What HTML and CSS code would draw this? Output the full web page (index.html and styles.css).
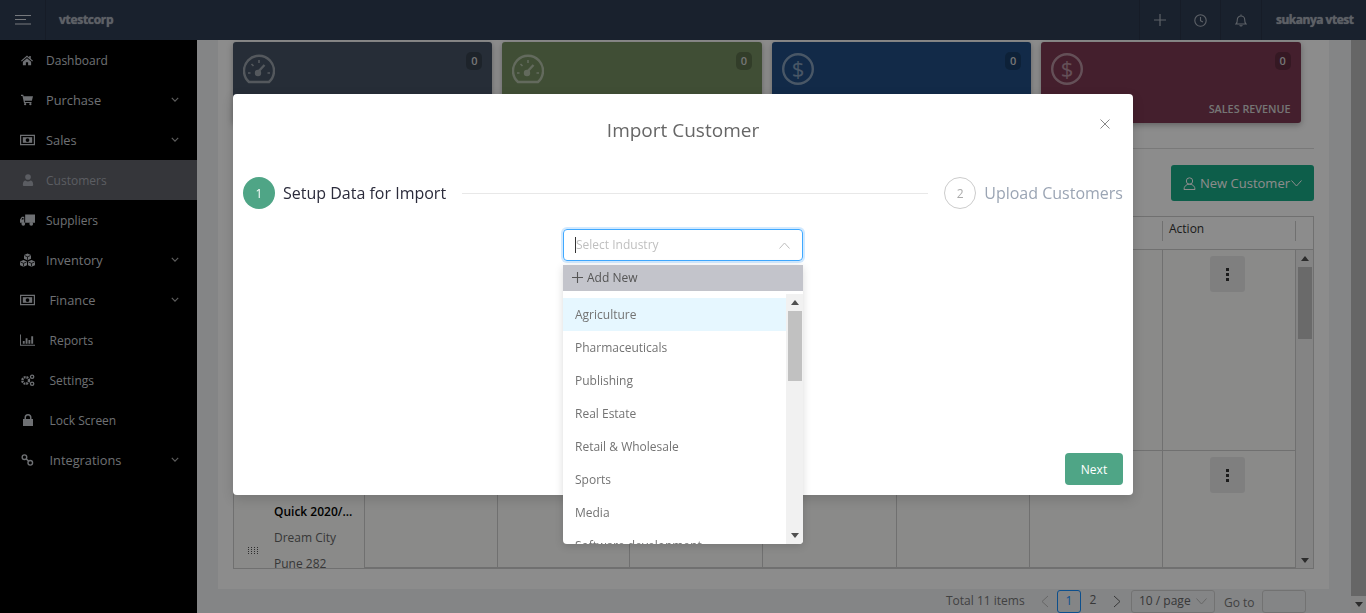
FILE: index.html
```html
<!DOCTYPE html>
<html lang="en">
<head>
<meta charset="utf-8">
<title>Customers</title>
<link rel="stylesheet" href="styles.css">
</head>
<body>
<header class="topbar">
  <div class="burger-cell">
    <svg class="burger" width="16" height="10" viewBox="0 0 16 10"><path d="M0 .5h16M0 4.500h11M0 9h16" stroke="#d8dde4" stroke-width="1" fill="none"/></svg>
  </div>
  <div class="brand">vtestcorp</div>
  <div class="top-actions">
    <div class="top-cell"><svg width="12" height="12" viewBox="0 0 12 12"><path d="M6 0v12M0 6h12" stroke="#aab2bd" stroke-width="1.200" fill="none"/></svg></div>
    <div class="top-cell"><svg width="13" height="13" viewBox="0 0 13 13" fill="none" stroke="#aab2bd" stroke-width="1.100"><circle cx="6.500" cy="6.500" r="5.700"/><path d="M6.500 3v3.700l2.400 1.400"/></svg></div>
    <div class="top-cell"><svg width="12" height="13" viewBox="0 0 12 13" fill="none" stroke="#aab2bd" stroke-width="1.100"><path d="M1 10h10c-1-1-1.300-2-1.300-4.300C9.700 3.500 8.200 2 6 2S2.300 3.500 2.300 5.700C2.300 8 2 9 1 10zM4.700 11.300c.4.900 2.200.9 2.600 0M6 .5V2"/></svg></div>
    <div class="user">sukanya vtest</div>
  </div>
</header>

<div class="layout">
  <nav class="sidebar">
    <a class="nav-item"><svg class="nav-icon" viewBox="0 0 16 14"><path d="M8 1 0 8l1 1 7-6 7 6 1-1-3-2.600V1.500h-2v2.200zM2.500 9.300V14h4V10h3v4h4V9.300L8 4.500z"/></svg><span class="nav-label">Dashboard</span></a>
    <a class="nav-item sub"><svg class="nav-icon" viewBox="0 0 16 14"><path d="M0 0h3l.5 2H16l-1.500 6H5l.3 1.500H14V11H4L2 1.500H0z"/><circle cx="5.500" cy="12.500" r="1.500"/><circle cx="12.500" cy="12.500" r="1.500"/></svg><span class="nav-label">Purchase</span><svg class="nav-caret" viewBox="0 0 10 6"><path d="M1 1l4 4 4-4"/></svg></a>
    <a class="nav-item sub"><svg class="nav-icon wide" viewBox="0 0 16 11"><path fill-rule="evenodd" d="M0 0h16v11H0zM1.300 1.300v8.400h13.400V1.300z"/><path d="M3 2.500h10v6H3z"/><circle cx="8" cy="5.500" r="2" fill="#000"/></svg><span class="nav-label">Sales</span><svg class="nav-caret" viewBox="0 0 10 6"><path d="M1 1l4 4 4-4"/></svg></a>
    <a class="nav-item active"><svg class="nav-icon user-icon" viewBox="0 0 12 14"><circle cx="6" cy="3.500" r="3.300"/><path d="M1 14c-1 0-1-.800-1-2 0-3 1.500-4.500 3-4.500 2 1.500 4 1.500 6 0 1.500 0 3 1.500 3 4.500 0 1.200 0 2-1 2z"/></svg><span class="nav-label">Customers</span></a>
    <a class="nav-item"><svg class="nav-icon wide" viewBox="0 0 16 12"><path d="M5.500 0H16v9H5.500zM4.500 2.500H2L0 5.500V9h4.500zM1.500 5.500l1-1.700h1.200v1.700z"/><circle cx="3.500" cy="10" r="2"/><circle cx="12" cy="10" r="2"/></svg><span class="nav-label">Suppliers</span></a>
    <a class="nav-item sub"><svg class="nav-icon big" viewBox="0 0 17 14"><path d="M8.500 0 5 1.500v3.700l3.500 1.500L12 5.200V1.500zM4.500 6.500 1 8v3.700l3.500 1.500L8 11.700V8zM12.500 6.500 9 8v3.700l3.500 1.500 3.500-1.500V8z"/><path d="M5.500 2l3 1.300L11.500 2M8.500 3.300v3M1.500 8.500l3 1.300 3-1.300M4.500 9.800v3M9.500 8.500l3 1.300 3-1.300M12.500 9.800v3" fill="none" stroke="#000" stroke-width=".8"/></svg><span class="nav-label">Inventory</span><svg class="nav-caret" viewBox="0 0 10 6"><path d="M1 1l4 4 4-4"/></svg></a>
    <a class="nav-item sub wide-gap"><svg class="nav-icon wide" viewBox="0 0 16 11"><path fill-rule="evenodd" d="M0 0h16v11H0zM1.300 1.300v8.400h13.400V1.300z"/><path d="M3 2.500h10v6H3z"/><circle cx="8" cy="5.500" r="2" fill="#000"/></svg><span class="nav-label">Finance</span><svg class="nav-caret" viewBox="0 0 10 6"><path d="M1 1l4 4 4-4"/></svg></a>
    <a class="nav-item wide-gap"><svg class="nav-icon wide" viewBox="0 0 16 12"><path d="M0 0h1v11h15v1H0zM3 7h2v3H3zM6 4h2v6H6zM9 6h2v4H9zM12 2h2v8h-2z"/></svg><span class="nav-label">Reports</span></a>
    <a class="nav-item wide-gap"><svg class="nav-icon wide" viewBox="0 0 16 13"><circle cx="6" cy="7" r="3.600" fill="none" stroke="#c8ccd2" stroke-width="2.600" stroke-dasharray="2 .9"/><circle cx="13" cy="3" r="1.800" fill="none" stroke="#c8ccd2" stroke-width="1.400"/><circle cx="13" cy="10.500" r="1.800" fill="none" stroke="#c8ccd2" stroke-width="1.400"/></svg><span class="nav-label">Settings</span></a>
    <a class="nav-item wide-gap"><svg class="nav-icon lock" viewBox="0 0 10 12"><path d="M0 5h1.500V3.500a3.500 3.500 0 0 1 7 0V5H10v7H0zM3 5h4V3.500a2 2 0 0 0-4 0z"/></svg><span class="nav-label">Lock Screen</span></a>
    <a class="nav-item sub wide-gap"><svg class="nav-icon wide" viewBox="0 0 14 13" fill="none"><circle cx="3.700" cy="3.500" r="2.500" fill="none" stroke="#c8ccd2" stroke-width="1.500"/><circle cx="10" cy="9.500" r="2.500" fill="none" stroke="#c8ccd2" stroke-width="1.500"/><path d="M5.500 5.300l3 2.500" stroke="#c8ccd2" stroke-width="1.500"/></svg><span class="nav-label">Integrations</span><svg class="nav-caret" viewBox="0 0 10 6"><path d="M1 1l4 4 4-4"/></svg></a>
  </nav>

  <main class="main">
    <section class="panel">
      <div class="cards">
        <div class="card slate">
          <svg class="card-icon" viewBox="0 0 32 32" fill="none" stroke="#fff" stroke-width="2.400"><path d="M6 29h20a15 15 0 1 0-20 0z"/><path d="M14.500 19.500 21.500 12"/><circle cx="15" cy="20" r="2" fill="#fff"/><path d="M5 20h2.500M24.500 20h2.500M8.500 11l2 2M16 7v3" stroke-width="1.600"/></svg>
          <span class="badge">0</span>
        </div>
        <div class="card olive">
          <svg class="card-icon" viewBox="0 0 32 32" fill="none" stroke="#fff" stroke-width="2.400"><path d="M6 29h20a15 15 0 1 0-20 0z"/><path d="M14.500 19.500 21.500 12"/><circle cx="15" cy="20" r="2" fill="#fff"/><path d="M5 20h2.500M24.500 20h2.500M8.500 11l2 2M16 7v3" stroke-width="1.600"/></svg>
          <span class="badge">0</span>
        </div>
        <div class="card navy">
          <svg class="card-icon" viewBox="0 0 32 32" fill="none" stroke="#fff" stroke-width="2.400"><circle cx="16" cy="16" r="14.800"/><text x="16" y="23.500" class="dollar">$</text></svg>
          <span class="badge">0</span>
        </div>
        <div class="card maroon">
          <svg class="card-icon" viewBox="0 0 32 32" fill="none" stroke="#fff" stroke-width="2.400"><circle cx="16" cy="16" r="14.800"/><text x="16" y="23.500" class="dollar">$</text></svg>
          <span class="badge">0</span>
          <span class="card-title">SALES REVENUE</span>
        </div>
      </div>
      <hr class="rule">
      <div class="toolbar">
        <button class="new-btn">
          <svg width="13" height="13" viewBox="0 0 13 13" fill="none" stroke="#fff" stroke-width="1"><circle cx="6.500" cy="4" r="3.200"/><path d="M1 12.500c0-3 2-5.300 5.500-5.300s5.500 2.300 5.500 5.300z"/></svg>
          <span>New Customer</span>
          <svg width="11" height="7" viewBox="0 0 11 7" fill="none" stroke="#fff" stroke-width="1"><path d="M.5 .5 5.500 6l5-5.500"/></svg>
        </button>
      </div>
      <div class="table">
        <div class="th"></div><div class="th"></div><div class="th"></div><div class="th"></div><div class="th"></div><div class="th"></div><div class="th"></div>
        <div class="th">Action</div><div class="th last"></div>

        <div class="td"></div><div class="td"></div><div class="td"></div><div class="td"></div><div class="td"></div><div class="td"></div><div class="td"></div>
        <div class="td action"><button class="kebab"><i></i><i></i><i></i></button></div>
        <div class="table-scroll">
          <svg class="arrow" width="8" height="5" viewBox="0 0 8 5"><path d="M0 5h8L4 0z"/></svg>
          <div class="table-thumb"></div>
          <svg class="arrow end" width="8" height="5" viewBox="0 0 8 5"><path d="M0 0h8L4 5z"/></svg>
        </div>

        <div class="td customer">
          <span class="grip"></span>
          <div class="customer-text">
            <strong>Quick 2020/...</strong>
            <span>Dream City</span>
            <span>Pune 282</span>
          </div>
        </div>
        <div class="td"></div><div class="td"></div><div class="td"></div><div class="td"></div><div class="td"></div><div class="td"></div>
        <div class="td action"><button class="kebab"><i></i><i></i><i></i></button></div>
      </div>
    </section>
    <div class="pager">
      <span class="total">Total 11 items</span>
      <svg class="pg-arrow prev" width="8" height="13" viewBox="0 0 8 13"><path d="M7 1 1 6.500 7 12"/></svg>
      <span class="pg current">1</span>
      <span class="pg">2</span>
      <svg class="pg-arrow next" width="8" height="13" viewBox="0 0 8 13"><path d="M1 1l6 5.500L1 12"/></svg>
      <span class="pg-size"><span class="pg-size-text">10 / page</span><svg width="11" height="7" viewBox="0 0 11 7" fill="none" stroke="#bbb" stroke-width="1"><path d="M.5 .5 5.500 6l5-5.500"/></svg></span>
      <span class="goto">Go to</span>
      <span class="goto-input"></span>
    </div>
  </main>
  <div class="page-scroll">
    <div class="page-thumb"></div>
    <svg class="page-arrow" width="8" height="5" viewBox="0 0 8 5"><path d="M0 0h8L4 5z"/></svg>
  </div>
</div>

<div class="overlay"></div>

<section class="modal">
  <h2 class="modal-title">Import Customer</h2>
  <svg class="modal-close" width="10" height="10" viewBox="0 0 10 10"><path d="M.5 .5l9 9M9.500 .5l-9 9" stroke="#888" stroke-width="1" fill="none"/></svg>
  <div class="steps">
    <span class="step-dot done">1</span>
    <span class="step-label">Setup Data for Import</span>
    <span class="step-line"></span>
    <span class="step-dot todo">2</span>
    <span class="step-label muted">Upload Customers</span>
  </div>
  <div class="modal-body">
    <div class="select">
      <span class="caret"></span>
      <span class="placeholder">Select Industry</span>
      <svg class="select-arrow" width="11" height="7" viewBox="0 0 11 7" fill="none" stroke="#bdbdbd" stroke-width="1"><path d="M.5 6.500 5.500 1l5 5.500"/></svg>
    </div>
  </div>
  <div class="modal-foot"><button class="next-btn">Next</button></div>
</section>

<div class="dropdown">
  <div class="add-new"><svg width="11" height="11" viewBox="0 0 11 11"><path d="M5.500 0v11M0 5.500h11" stroke="#555" stroke-width="1.100" fill="none"/></svg>Add New</div>
  <div class="dd-body">
    <ul class="options">
      <li class="selected">Agriculture</li>
      <li>Pharmaceuticals</li>
      <li>Publishing</li>
      <li>Real Estate</li>
      <li>Retail &amp; Wholesale</li>
      <li>Sports</li>
      <li>Media</li>
      <li>Software development</li>
    </ul>
    <div class="dd-scroll">
      <svg class="dd-arrow" width="8" height="5" viewBox="0 0 8 5"><path d="M0 5h8L4 0z"/></svg>
      <div class="dd-thumb"></div>
      <svg class="dd-arrow end" width="8" height="5" viewBox="0 0 8 5"><path d="M0 0h8L4 5z"/></svg>
    </div>
  </div>
</div>
</body>
</html>
```
FILE: styles.css
```css
* { box-sizing: border-box; }
html, body { margin: 0; height: 613px; overflow: hidden; }
body { font-family: "Open Sans", "Liberation Sans", sans-serif; font-size: 12px; color: #555; background: #f0f2f5; }

.topbar { height: 40px; display: flex; background: #2e3c52; color: #d8dde4; position: relative; z-index: 1; }
.burger-cell { width: 46px; display: flex; align-items: center; padding-left: 15px; border-right: 1px solid #283447; }
.brand { margin-left: 13px; font-size: 12px; font-weight: 700; letter-spacing: -.3px; line-height: 40px; color: #a9b0b9; text-shadow: 0 0 1px #a9b0b9; }
.top-actions { margin-left: auto; display: flex; }
.top-cell { width: 40.700px; display: flex; align-items: center; justify-content: center; border-left: 1px solid #283447; }
.user { width: 105px; border-left: 1px solid #283447; padding-left: 14px; font-size: 12px; font-weight: 700; letter-spacing: -.5px; line-height: 40px; color: #a9b0b9; text-shadow: 0 0 1px #a9b0b9; white-space: nowrap; }

.layout { display: flex; height: 573px; }
.sidebar { width: 197px; flex: none; background: #000; display: flex; flex-direction: column; }
.nav-item { height: 40px; display: flex; align-items: center; padding-left: 21px; color: #c8ccd2; position: relative; font-size: 12px; }
.nav-item.sub { font-size: 12.800px; }
.nav-icon { width: 12px; height: 12px; fill: #c8ccd2; flex: none; }
.nav-icon.wide { width: 15px; margin-left: -1px; }
.nav-icon.big { width: 17px; height: 15px; margin-left: -2px; }
.nav-icon.lock { width: 10px; margin-left: 2px; }
.nav-icon.user-icon { fill: #a6a9b2; margin-left: 1px; }
.nav-label { position: absolute; left: 46px; top: 50%; transform: translateY(-50%); }
.wide-gap .nav-label { left: 49.500px; }
.nav-caret { position: absolute; left: 171px; top: 17px; width: 8px; height: 5px; fill: none; stroke: #aaa; stroke-width: 1.500; }
.nav-item.active { background: #61636a; color: #a6a9b2; }

.main { flex: 1; min-width: 0; padding-left: 21px; display: flex; flex-direction: column; background: #f0f2f5; }
.panel { width: 1111px; height: 549px; background: #fff; padding: 2px 15px 0; }
.cards { display: grid; grid-template-columns: repeat(4, 259.400px); column-gap: 10px; }
.card { height: 81px; border-radius: 3px; position: relative; box-shadow: 0 2px 6px rgba(0,0,0,.3); }
.slate { background: #455364; }
.olive { background: #768f62; }
.navy { background: #214e83; }
.maroon { background: #7d3a52; }
.card-icon { position: absolute; left: 10px; top: 11px; width: 32px; height: 32px; opacity: .45; }
.dollar { font-family: "Open Sans", sans-serif; font-size: 22px; text-anchor: middle; fill: #fff; stroke: none; }
.badge { position: absolute; right: 10px; top: 10px; width: 16px; height: 18px; border-radius: 5px; background: rgba(0,0,0,.22); color: #d6d6d6; font-size: 11px; font-weight: 600; line-height: 18px; text-align: center; }
.card-title { position: absolute; right: 10px; bottom: 7px; color: #d6d6d6; font-size: 10.800px; font-weight: 600; }

.rule { border: 0; border-top: 1px solid #ddd; margin: 25px 0 16px; }
.toolbar { display: flex; justify-content: flex-end; }
.new-btn { width: 143px; height: 36px; border: 0; border-radius: 3px; background: #18ab87; color: #fff; font: 400 13px "Open Sans", sans-serif; display: flex; align-items: center; padding: 0 0 0 12px; gap: 4px; }
.new-btn span { margin-right: -3px; }

.table { margin-top: 15px; height: 353px; display: grid; grid-template-columns: 131px 133px 132px 133px 134px 133px 133px 133px 1fr; grid-template-rows: 33px 201px 1fr; border: 1px solid #cdcdcd; background: #fbfcfa; overflow: hidden; color: #555; }
.th { background: #fff; border-bottom: 1px solid #cdcdcd; position: relative; padding: 3px 6px; font-size: 12px; color: #333; }
.th::after { content: ""; position: absolute; right: 0; top: 4px; height: 20px; border-right: 1px solid #cdcdcd; }
.th.last::after { display: none; }
.td { border-right: 1px solid #cdcdcd; border-bottom: 1px solid #cdcdcd; min-height: 0; overflow: hidden; }
.action { display: flex; justify-content: center; padding: 6px 3px 0 0; }
.kebab { width: 35px; height: 36px; border: 0; border-radius: 3px; background: #e8e8e8; display: flex; flex-direction: column; align-items: center; justify-content: center; gap: 2px; padding: 0; }
.kebab i { width: 3px; height: 3px; background: #333; display: block; }
.table-scroll { grid-column: 9; grid-row: 2 / 4; background: #f1f1f1; display: flex; flex-direction: column; align-items: center; padding-top: 6px; }
.table-thumb { width: 14px; height: 72px; background: #c1c1c1; margin-top: 6px; }
.arrow { fill: #505050; }
.arrow.end { margin-top: auto; margin-bottom: 5px; }
.customer { display: flex; border-bottom: 0; }
.grip { width: 11px; height: 8px; margin: 96px 0 0 14px; background: repeating-linear-gradient(0deg, #fbfcfa 0 1px, transparent 1px 2px), repeating-linear-gradient(90deg, #555 0 1px, transparent 1px 3px); flex: none; }
.customer-text { margin-left: 15px; padding-top: 50px; display: flex; flex-direction: column; }
.customer-text strong { font-weight: 600; color: #000; font-size: 12px; line-height: 26px; margin-top: -2px; }
.customer-text span { line-height: 26px; font-size: 12px; color: #666; }

.pager { height: 24px; display: flex; align-items: center; width: 1133px; font-size: 12px; color: #777; position: relative; }
.total { margin-left: 728px; width: 95px; padding-bottom: 2px; }
.pg-arrow { fill: none; stroke: #bbb; stroke-width: 1; width: 8px; }
.pg-arrow.next { stroke: #666; margin: 0 10px 0 8px; }
.pg { width: 24px; height: 23px; line-height: 20px; text-align: center; color: #666; }
.pg.current { border: 1px solid #1890ff; border-radius: 3px; color: #1890ff; margin: 0 0 0 8px; line-height: 19px; }
.pg-size { width: 84px; height: 23px; border: 1px solid #d0d0d0; border-radius: 3px; padding-left: 7px; display: flex; align-items: center; gap: 5px; color: #666; }
.pg-size-text { padding-bottom: 2px; }
.goto { margin-left: 9px; padding-top: 3px; width: 38px; }
.goto-input { width: 44px; height: 23px; border: 1px solid #d0d0d0; border-radius: 3px; }

.page-scroll { width: 15px; flex: none; background: #f1f1f1; position: relative; display: flex; flex-direction: column; align-items: center; }
.page-thumb { width: 15px; height: 556px; background: #bababa; }
.page-arrow { fill: #505050; margin-top: 6px; }

.overlay { position: fixed; inset: 0; background: rgba(0,0,0,.45); z-index: 5; }

.modal { position: absolute; left: 233px; top: 94px; width: 900px; height: 401px; background: #fff; border-radius: 4px; z-index: 6; box-shadow: 0 4px 12px rgba(0,0,0,.15); display: flex; flex-direction: column; padding: 0 10px 10px; }
.modal-title { margin: 24px 0 0; height: 25px; font-size: 19px; line-height: 25px; font-weight: 400; text-align: center; color: #666; }
.modal-close { position: absolute; right: 23px; top: 25px; }
.steps { display: flex; align-items: center; margin-top: 34px; height: 32px; }
.step-dot { width: 32px; height: 32px; border-radius: 50%; display: flex; align-items: center; justify-content: center; font-size: 12px; flex: none; }
.step-dot.done { background: #4fa586; color: #fff; }
.step-dot.todo { border: 1px solid #ccc; color: #aaa; }
.step-label { font-size: 16px; color: #2b2b3b; margin-left: 8px; white-space: nowrap; }
.step-label.muted { color: #9ba5b4; }
.step-line { flex: 1; height: 1px; background: #e8e8e8; margin: 0 16px; }
.modal-body { flex: 1; display: flex; justify-content: center; padding-top: 20px; }
.select { width: 240px; height: 32px; border: 1px solid #40a9ff; border-radius: 4px; box-shadow: 0 0 0 2px rgba(24,144,255,.2); display: flex; align-items: center; padding: 0 12px 0 11px; }
.caret { width: 1px; height: 16px; background: #333; }
.placeholder { color: #bfbfbf; font-size: 12px; padding-bottom: 2px; }
.select-arrow { margin-left: auto; }
.modal-foot { display: flex; justify-content: flex-end; }
.next-btn { width: 58px; height: 32px; border: 0; border-radius: 4px; background: #4fa586; color: #fff; font: 400 12px "Open Sans", sans-serif; }

.dropdown { position: absolute; left: 563px; top: 265px; width: 240px; height: 279px; background: #fff; border-radius: 0 0 4px 4px; z-index: 7; box-shadow: 0 2px 8px rgba(0,0,0,.15); overflow: hidden; display: flex; flex-direction: column; }
.add-new { height: 26px; flex: none; background: #c3c4cb; display: flex; align-items: center; gap: 4px; padding: 0 0 2px 9px; color: #555; font-size: 12px; }
.dd-body { flex: 1; min-height: 0; display: flex; padding-top: 3px; }
.options { list-style: none; margin: 4px 0 0; padding: 0; flex: 1; overflow: hidden; }
.options li { height: 33px; line-height: 33px; padding-left: 12px; color: #737373; font-size: 12px; }
.options li.selected { background: #e6f7ff; }
.dd-scroll { width: 17px; background: #f1f1f1; display: flex; flex-direction: column; align-items: center; padding-top: 6px; }
.dd-thumb { width: 14px; height: 70px; background: #c1c1c1; margin-top: 6px; }
.dd-arrow { fill: #505050; }
.dd-arrow.end { margin-top: auto; margin-bottom: 6px; }
```
